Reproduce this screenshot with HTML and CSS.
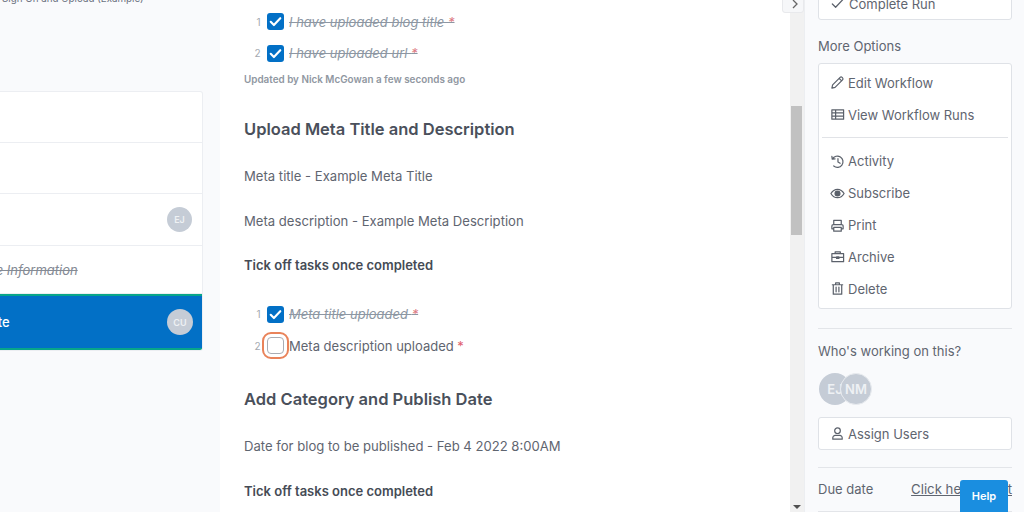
FILE: index.html
```html
<!DOCTYPE html>
<html lang="en">
<head>
<meta charset="utf-8">
<title>Workflow Run</title>
<link rel="stylesheet" href="styles.css">
</head>
<body>
<div class="app">
  <aside class="left">
    <div class="crumb">Sign On and Upload (Example)</div>
    <div class="tasks">
      <div class="task t1"></div>
      <div class="task t2"></div>
      <div class="task t3"><span class="avatar small">EJ</span></div>
      <div class="task t4"><span class="done-name">Update Information</span></div>
      <div class="task active"><span class="active-name">Publish Date</span><span class="avatar cu">CU</span></div>
    </div>
  </aside>
  <main class="center">
    <ol class="checks first">
      <li class="check"><span class="num">1</span><span class="box on"><svg viewBox="0 0 16 16" class="tick"><path d="M3.5 8.3l3 3 6-6.4"/></svg></span><span class="struck">I have uploaded blog title <b>*</b></span></li>
      <li class="check"><span class="num">2</span><span class="box on"><svg viewBox="0 0 16 16" class="tick"><path d="M3.5 8.3l3 3 6-6.4"/></svg></span><span class="struck">I have uploaded url <b>*</b></span></li>
    </ol>
    <p class="updated">Updated by Nick McGowan a few seconds ago</p>
    <h2 class="h-one">Upload Meta Title and Description</h2>
    <p class="body b1">Meta title - Example Meta Title</p>
    <p class="body b2">Meta description - Example Meta Description</p>
    <p class="body strong b3">Tick off tasks once completed</p>
    <ol class="checks second">
      <li class="check"><span class="num">1</span><span class="box on"><svg viewBox="0 0 16 16" class="tick"><path d="M3.5 8.3l3 3 6-6.4"/></svg></span><span class="struck">Meta title uploaded <b>*</b></span></li>
      <li class="check"><span class="num">2</span><span class="box off"></span><span class="open">Meta description uploaded <b>*</b></span></li>
    </ol>
    <h2 class="h-two">Add Category and Publish Date</h2>
    <p class="body b4">Date for blog to be published - Feb 4 2022 8:00AM</p>
    <p class="body strong b5">Tick off tasks once completed</p>
  </main>
  <div class="scroller">
    <span class="collapse"><svg viewBox="0 0 10 10"><path d="M3 1l4 4-4 4"/></svg></span>
    <span class="thumb"></span>
    <span class="arrow"></span>
  </div>
  <aside class="right">
    <div class="btn complete"><svg viewBox="0 0 16 16" class="ico"><path d="M2.5 8.5l3.5 3.5 7.500-8"/></svg><span>Complete Run</span></div>
    <div class="label more">More Options</div>
    <div class="menu">
      <div class="item"><svg viewBox="0 0 16 16" class="ico"><path d="M2 14l.8-3.4 8-8a1.500 1.500 0 0 1 2.100 0l.5.5a1.500 1.500 0 0 1 0 2.100l-8 8L2 14zM9.800 3.600l2.600 2.600"/></svg><span>Edit Workflow</span></div>
      <div class="item"><svg viewBox="0 0 16 16" class="ico"><path d="M2 3h12.500v10H2zM2 6.300h12.500M2 9.700h12.500M6 3v10"/></svg><span>View Workflow Runs</span></div>
      <hr class="sep">
      <div class="item"><svg viewBox="0 0 16 16" class="ico"><path d="M2 2.500l.4 3 3-.4M2.600 5.300A6 6 0 1 1 4 12.800M8.500 5v3.500l2.300 1.400"/></svg><span>Activity</span></div>
      <div class="item"><svg viewBox="0 0 16 16" class="ico"><path d="M1 8s2.600-4.500 7-4.500S15 8 15 8s-2.600 4.500-7 4.500S1 8 1 8z"/><circle cx="8" cy="8" r="2.600" class="fill"/></svg><span>Subscribe</span></div>
      <div class="item"><svg viewBox="0 0 16 16" class="ico"><path d="M4 7V2.500h8V7M4 11.500H2V8.500a1.500 1.500 0 0 1 1.500-1.500h9A1.500 1.500 0 0 1 14 8.500v3h-2M4 10h8v4H4z"/></svg><span>Print</span></div>
      <div class="item"><svg viewBox="0 0 16 16" class="ico"><path d="M2 5h12.500v8.500H2zM5.500 5V3h5.500v2M2 9h12.500M7 8.500h2.500V10H7z"/></svg><span>Archive</span></div>
      <div class="item"><svg viewBox="0 0 16 16" class="ico"><path d="M2.500 4h11M6 4V2h4v2M3.500 4v10h9V4M6.500 6.500v5M9.500 6.500v5"/></svg><span>Delete</span></div>
    </div>
    <hr class="rule r1">
    <div class="label who">Who's working on this?</div>
    <div class="people"><span class="avatar big">EJ</span><span class="avatar big over">NM</span></div>
    <div class="btn assign"><svg viewBox="0 0 16 16" class="ico"><circle cx="8" cy="5" r="3"/><path d="M3 14v-1.500A2.500 2.500 0 0 1 5.500 10h5a2.500 2.500 0 0 1 2.500 2.500V14z"/></svg><span>Assign Users</span></div>
    <hr class="rule r2">
    <div class="due"><span class="label">Due date</span><a class="link">Click here to set</a></div>
    <hr class="rule r3">
  </aside>
</div>
<button class="help">Help</button>
</body>
</html>
```

FILE: styles.css
```css
* { box-sizing: border-box; }
html, body { margin: 0; height: 512px; overflow: hidden; }
body { font-family: Inter, "Liberation Sans", sans-serif; color: #5f6570; background: #f9fafc; }
.app { display: flex; width: 1024px; height: 512px; overflow: hidden; }

/* left column */
.left { width: 220px; background: #f9fafc; overflow: hidden; flex: none; }
.crumb { font-size: 9.800px; line-height: 12px; margin-top: -7px; padding-left: 2px; color: #6b7280; height: 98px; white-space: nowrap; }
.tasks { width: 203px; background: #fff; border: 1px solid #eceef2; border-left: 0; border-radius: 0 3px 3px 0; }
.task { display: flex; align-items: center; justify-content: flex-end; padding-right: 10px; border-bottom: 1px solid #eceef2; position: relative; }
.t1, .t2 { height: 51px; }
.t3 { height: 52px; }
.t4 { height: 48px; justify-content: flex-start; padding: 0; }
.done-name { font-size: 13px; font-style: italic; color: #858b95; text-decoration: line-through; white-space: nowrap; margin-left: -42px; }
.active { height: 56px; background: #0270c6; border-top: 2px solid #07a58a; border-bottom: 2px solid #07a58a; justify-content: space-between; padding-right: 9px; border-radius: 0 0 2px 0; }
.active-name { color: #fff; font-size: 13px; font-weight: 500; margin-left: -68px; white-space: nowrap; }
.avatar { display: inline-flex; align-items: center; justify-content: center; border-radius: 50%; background: #c5ccd6; color: #eef1f4; font-weight: 600; }
.small { width: 25px; height: 25px; font-size: 9px; }
.cu { width: 26px; height: 26px; font-size: 9px; }

/* centre */
.center { width: 570px; flex: none; background: #fff; padding-left: 24px; overflow: hidden; }
.checks { list-style: none; margin: 0; padding: 0; }
.first { margin-top: 6px; }
.check { display: flex; align-items: center; height: 31.500px; font-size: 13px; }
.num { width: 16.500px; font-size: 10px; color: #a4a9b0; text-align: right; flex: none; }
.box { width: 17px; height: 17px; border-radius: 3px; margin: 0 5.500px 0 6px; flex: none; display: inline-flex; }
.on { background: #0270c6; }
.off { background: #fff; border: 1px solid #a9adb4; outline: 2px solid #e9835a; outline-offset: 3px; border-radius: 4px; }
.tick { width: 17px; height: 17px; fill: none; stroke: #fff; stroke-width: 2; stroke-linecap: round; stroke-linejoin: round; }
.struck { font-style: italic; color: #8d97a3; text-decoration: line-through; white-space: nowrap; }
.struck b { color: #dc7a82; font-weight: 400; }
.open { color: #5f6570; white-space: nowrap; }
.open b { color: #e0606c; font-weight: 400; }
.updated { margin: 4px 0 0; font-size: 9.900px; line-height: 13px; font-weight: 600; color: #9097a1; }
h2 { margin: 0; font-size: 16.500px; line-height: 22px; font-weight: 600; color: #4a505b; }
.h-one { margin-top: 32px; }
.body { margin: 0; font-size: 13.100px; line-height: 18px; color: #5f6570; }
.strong { font-size: 13px; font-weight: 600; color: #454b55; }
.b1 { margin-top: 27px; }
.b2 { margin-top: 27px; }
.b3 { margin-top: 26px; }
.second { margin-top: 24.500px; }
.h-two { margin-top: 26.500px; }
.b4 { margin-top: 27px; }
.b5 { margin-top: 27px; }

/* scrollbar */
.scroller { width: 14px; flex: none; background: #f1f1f1; position: relative; }
.thumb { position: absolute; left: 1px; top: 106px; width: 11px; height: 129px; background: #c1c1c1; }
.arrow { position: absolute; left: 3px; bottom: 3px; border: 4px solid transparent; border-top: 4px solid #505050; border-bottom: 0; }
.collapse { position: absolute; left: -8px; top: -6px; width: 22px; height: 19px; background: #f6f7f9; border: 1px solid #e8e9ec; border-radius: 3px; display: flex; align-items: center; justify-content: center; }
.collapse svg { width: 10px; height: 10px; margin-left: 4px; fill: none; stroke: #666; stroke-width: 1.300; }

/* right */
.right { width: 220px; flex: none; background: #f9fafc; padding: 0 13px; overflow: hidden; border-left: 1px solid #eceef1; }
.ico { width: 15px; height: 15px; flex: none; fill: none; stroke: #5b616b; stroke-width: 1.300; stroke-linejoin: round; stroke-linecap: round; }
.ico .fill { fill: #5b616b; }
.btn { display: flex; align-items: center; background: #fff; border: 1px solid #dfe2e7; border-radius: 3px; font-size: 13px; color: #5f6570; padding-left: 11px; width: 194px; }
.complete { height: 33px; margin-top: -13px; gap: 4px; }
.label { font-size: 13px; color: #5f6570; }
.more { margin-top: 17px; line-height: 18px; }
.menu { width: 194px; height: 246px; margin-top: 8px; background: #fff; border: 1px solid #dfe2e7; border-radius: 3px; padding: 3px 3px 0; }
.item { display: flex; align-items: center; gap: 3px; height: 31.800px; padding-left: 8px; font-size: 13px; color: #5f6570; }
.sep { border: 0; border-top: 1px solid #e1e3e7; margin: 6px 0 8px; }
.rule { border: 0; border-top: 1px solid #e3e5e9; margin: 0; width: 194px; }
.r1 { margin-top: 19px; }
.who { margin-top: 13px; line-height: 18px; }
.people { display: flex; margin-top: 13px; padding-left: 1px; }
.big { width: 32px; height: 32px; font-size: 13px; }
.over { margin-left: -11px; border: 1px solid #e8ebef; }
.assign { height: 33px; margin-top: 12px; gap: 3px; }
.r2 { margin-top: 17px; }
.due { display: flex; justify-content: space-between; align-items: center; width: 194px; height: 43px; padding-bottom: 2px; }
.link { font-size: 13.200px; text-decoration: underline; color: #5f6570; white-space: nowrap; }
.help { position: absolute; left: 960px; top: 480px; width: 48px; height: 32px; background: #1a8ee0; color: #fff; border: 0; border-radius: 3px 3px 0 0; font: 600 11px Inter, sans-serif; }
```
